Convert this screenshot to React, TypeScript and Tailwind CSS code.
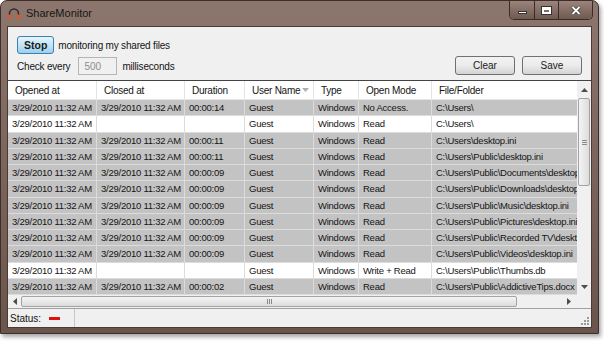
import React from 'react';

type Row = {
  opened: string;
  closed: string;
  duration: string;
  user: string;
  type: string;
  mode: string;
  path: string;
  white?: boolean;
};

const T = '3/29/2010 11:32 AM';

const ROWS: Row[] = [
  { opened: T, closed: T, duration: '00:00:14', user: 'Guest', type: 'Windows', mode: 'No Access.', path: 'C:\\Users\\' },
  { opened: T, closed: '', duration: '', user: 'Guest', type: 'Windows', mode: 'Read', path: 'C:\\Users\\', white: true },
  { opened: T, closed: T, duration: '00:00:11', user: 'Guest', type: 'Windows', mode: 'Read', path: 'C:\\Users\\desktop.ini' },
  { opened: T, closed: T, duration: '00:00:11', user: 'Guest', type: 'Windows', mode: 'Read', path: 'C:\\Users\\Public\\desktop.ini' },
  { opened: T, closed: T, duration: '00:00:09', user: 'Guest', type: 'Windows', mode: 'Read', path: 'C:\\Users\\Public\\Documents\\desktop.ini' },
  { opened: T, closed: T, duration: '00:00:09', user: 'Guest', type: 'Windows', mode: 'Read', path: 'C:\\Users\\Public\\Downloads\\desktop.ini' },
  { opened: T, closed: T, duration: '00:00:09', user: 'Guest', type: 'Windows', mode: 'Read', path: 'C:\\Users\\Public\\Music\\desktop.ini' },
  { opened: T, closed: T, duration: '00:00:09', user: 'Guest', type: 'Windows', mode: 'Read', path: 'C:\\Users\\Public\\Pictures\\desktop.ini' },
  { opened: T, closed: T, duration: '00:00:09', user: 'Guest', type: 'Windows', mode: 'Read', path: 'C:\\Users\\Public\\Recorded TV\\desktop.ini' },
  { opened: T, closed: T, duration: '00:00:09', user: 'Guest', type: 'Windows', mode: 'Read', path: 'C:\\Users\\Public\\Videos\\desktop.ini' },
  { opened: T, closed: '', duration: '', user: 'Guest', type: 'Windows', mode: 'Write + Read', path: 'C:\\Users\\Public\\Thumbs.db', white: true },
  { opened: T, closed: T, duration: '00:00:02', user: 'Guest', type: 'Windows', mode: 'Read', path: 'C:\\Users\\Public\\AddictiveTips.docx' },
];

const COLS = 'grid grid-cols-[89px_88px_60px_69px_45px_73px_146px]';

function AppIcon() {
  return (
    <svg width="14" height="12" viewBox="0 0 14 12">
      <path d="M2.5 9 V6.5 A4.5 4.5 0 0 1 11.5 6.5 V9" fill="none" stroke="#2e2e2e" strokeWidth="1.6" />
      <rect x="0.8" y="7.5" width="3.4" height="4" rx="1" fill="#e0552a" />
      <rect x="9.8" y="7.5" width="3.4" height="4" rx="1" fill="#e0552a" />
    </svg>
  );
}

function WinButtons() {
  return (
    <div className="flex h-[19px] overflow-hidden rounded-b-[5px] border border-t-0 border-[#3a2b26] shadow-[inset_0_0_0_1px_rgba(255,255,255,0.25)]">
      <div className="flex w-[25px] items-center justify-center border-r border-[#3a2b26] bg-gradient-to-b from-[#9a847b] to-[#6f5a52]">
        <div className="mt-[5px] h-[3px] w-[9px] border border-[#333] bg-white" />
      </div>
      <div className="flex w-[24px] items-center justify-center border-r border-[#3a2b26] bg-gradient-to-b from-[#9a847b] to-[#6f5a52]">
        <div className="h-[7px] w-[9px] border-[2px] border-t-[3px] border-white outline outline-1 outline-[#333]" />
      </div>
      <div className="flex w-[33px] items-center justify-center bg-gradient-to-b from-[#9a847b] to-[#6f5a52]">
        <svg width="10" height="9" viewBox="0 0 10 9">
          <path d="M1.5 1 L8.5 8 M8.5 1 L1.5 8" stroke="#333" strokeWidth="3.2" />
          <path d="M1.5 1 L8.5 8 M8.5 1 L1.5 8" stroke="#fff" strokeWidth="1.8" />
        </svg>
      </div>
    </div>
  );
}

function WinButton({ label, primary }: { label: string; primary?: boolean }) {
  return (
    <button
      className={
        primary
          ? 'h-[18px] rounded-[3px] border border-[#3c7fb1] bg-gradient-to-b from-[#e5f4fc] via-[#c4e5f6] to-[#98d1ef] px-[6px] text-[10.5px] font-bold leading-none text-[#1a1a1a]'
          : 'h-[19px] w-[60px] rounded-[3px] border border-[#707070] bg-gradient-to-b from-[#f2f2f2] via-[#ebebeb] to-[#d3d3d3] text-[10px] leading-none text-[#1a1a1a]'
      }
    >
      {label}
    </button>
  );
}

function Arrow({ dir }: { dir: 'up' | 'down' | 'left' | 'right' }) {
  const d =
    dir === 'up'
      ? 'M0 4 L3.5 0 L7 4 Z'
      : dir === 'down'
        ? 'M0 0 L7 0 L3.5 4 Z'
        : dir === 'left'
          ? 'M4 0 L4 7 L0 3.5 Z'
          : 'M0 0 L4 3.5 L0 7 Z';
  const w = dir === 'up' || dir === 'down' ? 7 : 4;
  const h = dir === 'up' || dir === 'down' ? 4 : 7;
  return (
    <svg width={w} height={h} viewBox={`0 0 ${w} ${h}`}>
      <path d={d} fill="#4d4d4d" />
    </svg>
  );
}

function Cell({ children, last }: { children?: React.ReactNode; last?: boolean }) {
  return (
    <div
      className={
        'overflow-hidden whitespace-nowrap pl-[4px] leading-[15.25px] ' + (last ? '' : 'border-r border-[#dcdcdc]')
      }
    >
      {children}
    </div>
  );
}

export default function App() {
  return (
    <div
      className="h-[341px] w-[604px] overflow-hidden bg-white text-[#141414]"
      style={{ fontFamily: '"Liberation Sans", Arial, sans-serif' }}
    >
      <div className="flex h-[334px] w-[599px] flex-col rounded-t-[7px] border border-[#3d2e29] bg-gradient-to-b from-[#8d766d] via-[#7b645b] to-[#6a554d] shadow-[2px_3px_4px_rgba(0,0,0,0.35)]">
        {/* title bar */}
        <div className="flex h-[25px] shrink-0 items-start">
          <div className="mt-[6px] ml-[6px] flex items-center gap-[5px]">
            <AppIcon />
            <span className="text-[11px] leading-none text-[#151515]">ShareMonitor</span>
          </div>
          <div className="ml-auto mr-[5px]">
            <WinButtons />
          </div>
        </div>

        {/* client area */}
        <div className="mx-[6px] flex h-[302px] flex-col border border-[#4a3a34] bg-[#f0f0f0] text-[10px]">
          <div className="flex h-[53px] shrink-0 justify-between px-[9px]">
            <div className="flex flex-col pt-[9px]">
              <div className="flex items-center gap-[4px]">
                <WinButton label="Stop" primary />
                <span className="tracking-[-0.2px]">monitoring my shared files</span>
              </div>
              <div className="mt-[3px] flex items-center">
                <span className="tracking-[-0.2px]">Check every</span>
                <div className="ml-[8px] flex h-[18px] w-[39px] items-center border border-[#b5b5b5] bg-[#f0f0f0] pl-[5px] text-[#8d8d8d]">
                  500
                </div>
                <span className="ml-[5px] tracking-[-0.2px]">milliseconds</span>
              </div>
            </div>
            <div className="flex items-end gap-[7px] pb-[5px]">
              <WinButton label="Clear" />
              <WinButton label="Save" />
            </div>
          </div>

          {/* grid */}
          <div className="flex min-h-0 flex-1 flex-col border-t border-[#444] bg-white text-[9.5px] tracking-[-0.25px]">
            <div className="flex h-[214px]">
              <div className="flex-1 overflow-hidden">
                <div className={COLS + ' h-[19px] border-b border-[#e6e6e6] bg-white'}>
                  {['Opened at', 'Closed at', 'Duration', 'User Name', 'Type', 'Open Mode', 'File/Folder'].map((h, i) => (
                    <div
                      key={h}
                      className={
                        'flex items-center whitespace-nowrap pl-[7px] pr-[4px] text-[10px] ' +
                        (i < 6 ? 'border-r border-[#e3e3e3]' : '')
                      }
                    >
                      <span>{h}</span>
                      {h === 'User Name' && (
                        <svg className="ml-auto" width="7" height="4" viewBox="0 0 7 4">
                          <path d="M0 0 L7 0 L3.5 4 Z" fill="#a8b0b8" />
                        </svg>
                      )}
                    </div>
                  ))}
                </div>
                {ROWS.map((r, i) => (
                  <div
                    key={i}
                    className={
                      COLS + ' h-[16.25px] border-b border-[#dcdcdc] ' + (r.white ? 'bg-white' : 'bg-[#c3c3c3]')
                    }
                  >
                    <Cell>{r.opened}</Cell>
                    <Cell>{r.closed}</Cell>
                    <Cell>{r.duration}</Cell>
                    <Cell>{r.user}</Cell>
                    <Cell>{r.type}</Cell>
                    <Cell>{r.mode}</Cell>
                    <Cell last>{r.path}</Cell>
                  </div>
                ))}
              </div>
              {/* vertical scrollbar */}
              <div className="flex w-[14px] shrink-0 flex-col items-center bg-[#f0f0f0]">
                <div className="flex h-[17px] items-center">
                  <Arrow dir="up" />
                </div>
                <div className="flex h-[88px] w-[12px] items-center justify-center rounded-[2px] border border-[#a3a3a3] bg-gradient-to-r from-[#f4f4f4] to-[#dcdcdc]">
                  <div className="flex flex-col gap-[1px]">
                    <div className="h-px w-[5px] bg-[#8a8a8a]" />
                    <div className="h-px w-[5px] bg-[#8a8a8a]" />
                    <div className="h-px w-[5px] bg-[#8a8a8a]" />
                  </div>
                </div>
                <div className="flex-1" />
                <div className="flex h-[17px] items-center">
                  <Arrow dir="down" />
                </div>
              </div>
            </div>
            {/* horizontal scrollbar */}
            <div className="flex h-[13px] shrink-0 bg-[#f0f0f0]">
              <div className="flex w-[13px] items-center justify-center">
                <Arrow dir="left" />
              </div>
              <div className="my-[1px] flex w-[496px] items-center justify-center rounded-[2px] border border-[#a3a3a3] bg-gradient-to-b from-[#f4f4f4] to-[#dcdcdc]">
                <div className="flex gap-[1px]">
                  <div className="h-[5px] w-px bg-[#8a8a8a]" />
                  <div className="h-[5px] w-px bg-[#8a8a8a]" />
                  <div className="h-[5px] w-px bg-[#8a8a8a]" />
                </div>
              </div>
              <div className="flex-1" />
              <div className="flex w-[16px] items-center justify-center">
                <Arrow dir="right" />
              </div>
              <div className="w-[14px] bg-[#f0f0f0]" />
            </div>
          </div>

          {/* status bar */}
          <div className="flex h-[19px] shrink-0 items-center border-t border-[#a0a0a0] bg-[#f0f0f0] text-[10px]">
            <div className="flex h-full items-center border-r border-[#c8c8c8] pl-[2px] pr-[14px]">
              <span>Status:</span>
              <div className="ml-[8px] h-[3px] w-[11px] bg-[#e01010]" />
            </div>
            <div className="ml-auto mr-[2px] mt-[6px] grid grid-cols-3 gap-[1px]">
              <div />
              <div />
              <div className="h-[2px] w-[2px] bg-[#9a9a9a]" />
              <div />
              <div className="h-[2px] w-[2px] bg-[#9a9a9a]" />
              <div className="h-[2px] w-[2px] bg-[#9a9a9a]" />
              <div className="h-[2px] w-[2px] bg-[#9a9a9a]" />
              <div className="h-[2px] w-[2px] bg-[#9a9a9a]" />
              <div className="h-[2px] w-[2px] bg-[#9a9a9a]" />
            </div>
          </div>
        </div>
      </div>
    </div>
  );
}
